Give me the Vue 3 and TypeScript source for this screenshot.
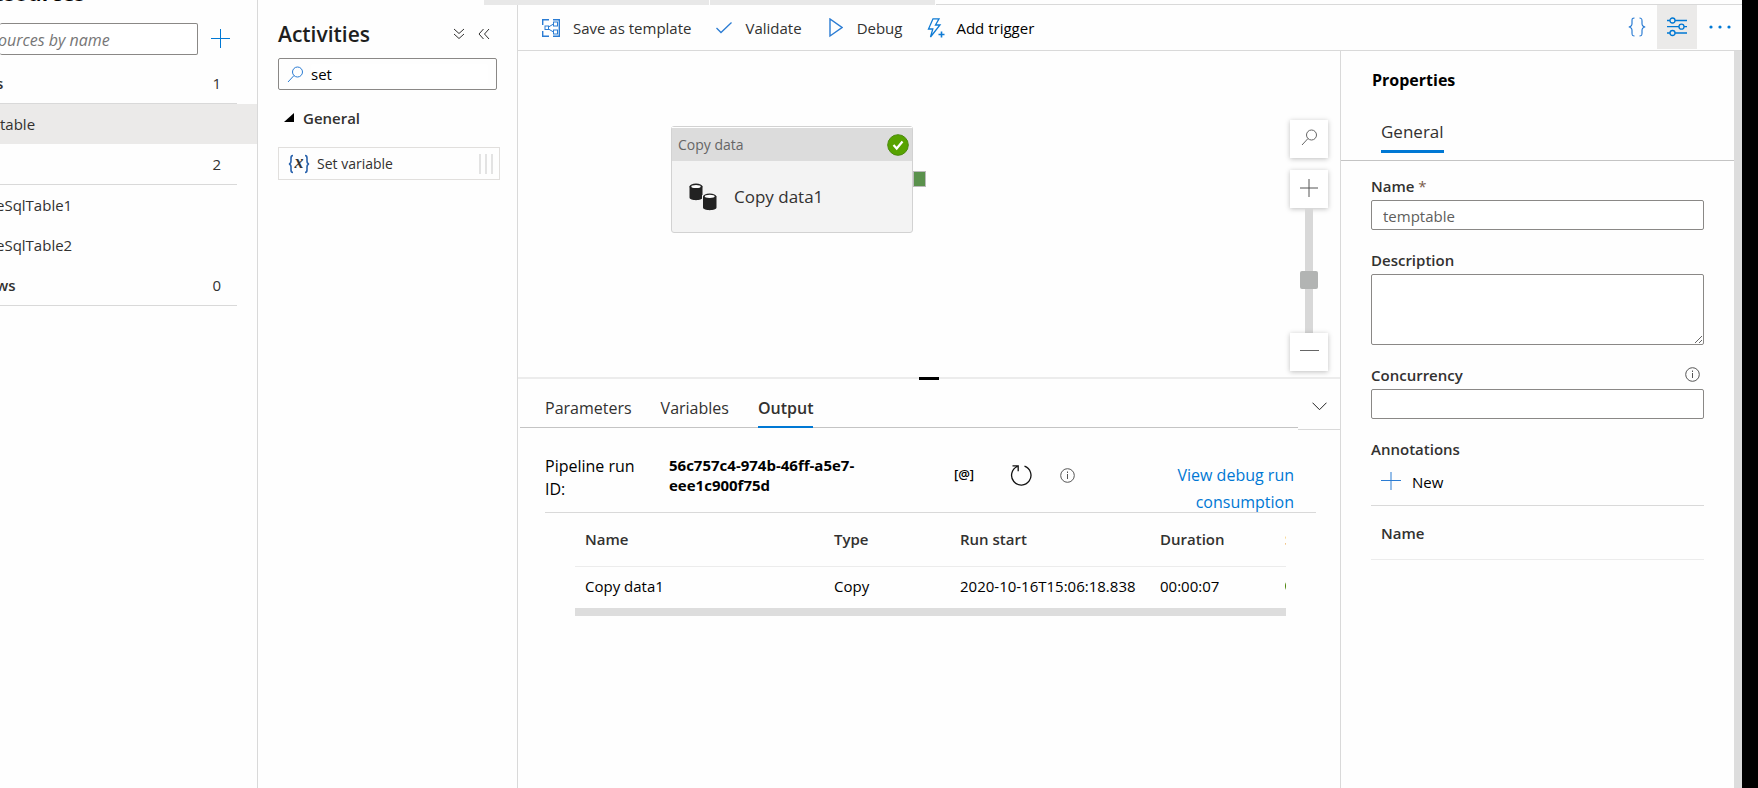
<script setup lang="ts">
import { ref } from 'vue'

interface ResourceRow {
  label: string
  kind: 'group' | 'item'
  count?: number
  selected?: boolean
}

interface ActivityRun {
  name: string
  type: string
  start: string
  duration: string
}

const resources: ResourceRow[] = [
  { label: 's', kind: 'group', count: 1 },
  { label: 'table', kind: 'item', selected: true },
  { label: '', kind: 'group', count: 2 },
  { label: 'eSqlTable1', kind: 'item' },
  { label: 'eSqlTable2', kind: 'item' },
  { label: 'ws', kind: 'group', count: 0 },
]

const runs: ActivityRun[] = [
  { name: 'Copy data1', type: 'Copy', start: '2020-10-16T15:06:18.838', duration: '00:00:07' },
]

const tabs = ['Parameters', 'Variables', 'Output']
const activeTab = ref('Output')
const resourceFilter = ref('')
const activityFilter = ref('set')
const zoomLevel = ref(41)
const pipelineName = ref('temptable')
const description = ref('')
const concurrency = ref('')
</script>

<template>
  <div class="app">
    <aside class="resources">
      <h2 class="resources-title">esources</h2>
      <div class="resources-search">
        <input v-model="resourceFilter" type="text" placeholder="ources by name" aria-label="Filter by name" />
        <button type="button" class="plain" aria-label="Add resource">
          <svg width="20" height="20" viewBox="0 0 20 20" fill="none" stroke="#0078d4"><path d="M10.5 0v19M1 9.5h19" /></svg>
        </button>
      </div>
      <ul class="resource-list">
        <li v-for="(row, i) in resources" :key="i" :class="[row.kind, { selected: row.selected }]">
          <span>{{ row.label }}</span>
          <span v-if="row.kind === 'group'" class="count">{{ row.count }}</span>
        </li>
      </ul>
    </aside>

    <div class="body">
      <div class="tab-strip">
        <div class="strip-tab"></div>
        <div class="strip-tab"></div>
        <div class="strip-rest"></div>
      </div>

      <div class="columns">
        <section class="activities">
          <header class="activities-head">
            <h2>Activities</h2>
            <button type="button" class="plain" aria-label="Expand all">
              <svg width="12" height="12" viewBox="0 0 12 12" fill="none" stroke="#323130"><path d="M1 1l5 4.500 5-4.500M1 6l5 4.500 5-4.500" /></svg>
            </button>
            <button type="button" class="plain" aria-label="Collapse panel">
              <svg width="12" height="12" viewBox="0 0 12 12" fill="none" stroke="#323130"><path d="M5.500 1L1 6l4.500 5M11 1L6.500 6l4.500 5" /></svg>
            </button>
          </header>
          <div class="activity-search">
            <svg width="17" height="17" viewBox="0 0 17 17" fill="none" stroke="#2b7cd3"><circle cx="10.500" cy="6" r="5" /><path d="M7 9.500L1 16" /></svg>
            <input v-model="activityFilter" type="text" aria-label="Search activities" />
          </div>
          <button type="button" class="plain group-toggle">
            <svg width="10" height="10" viewBox="0 0 10 10"><path d="M10 0v9H0z" fill="#000" /></svg>
            General
          </button>
          <div class="activity-item">
            <svg width="22" height="20" viewBox="0 0 22 20" fill="none">
              <path d="M5 1.500C3 1.500 3 2.500 3 4v3c0 2-.5 2.700-2 3 1.500.3 2 1 2 3v3c0 1.500 0 2.500 2 2.500M17 1.500c2 0 2 1 2 2.500v3c0 2 .5 2.700 2 3-1.500.3-2 1-2 3v3c0 1.500 0 2.500-2 2.500" stroke="#2a63ad" stroke-width="1.600" />
              <text x="11" y="14" text-anchor="middle" fill="#333" font-family="Liberation Serif, serif" font-size="18" font-style="italic" font-weight="700">x</text>
            </svg>
            <span>Set variable</span>
            <i class="grip"></i>
          </div>
        </section>

        <main class="workspace">
          <div class="toolbar">
            <button type="button" class="plain tool save">
              <svg width="18" height="18" viewBox="0 0 18 18" fill="none" stroke="#2b7cd3">
                <path d="M7 .7H.7V6M.7 12v5.300H7M11 17.300h6.300V7M17.300 7V.7H11" stroke-width="1.400" />
                <rect x="3" y="7" width="3.500" height="3.500" /><rect x="11.500" y="3" width="4" height="4" /><rect x="11.500" y="11" width="4" height="4" />
                <path d="M6.500 8l5-3M6.500 10l5 3" />
              </svg>
              Save as template
            </button>
            <button type="button" class="plain tool validate">
              <svg width="16" height="12" viewBox="0 0 16 12" fill="none" stroke="#2b7cd3" stroke-width="1.300"><path d="M.5 6L5 10.500 15.500.5" /></svg>
              Validate
            </button>
            <button type="button" class="plain tool debug">
              <svg width="14" height="20" viewBox="0 0 14 20" fill="none" stroke="#2b7cd3" stroke-width="1.400"><path d="M1 1v17L13 9.500z" /></svg>
              Debug
            </button>
            <button type="button" class="plain tool trigger">
              <svg width="18" height="20" viewBox="0 0 18 20" fill="none" stroke="#0f7bd4" stroke-width="1.300">
                <path d="M6 .8h6L8.500 7H13L3.500 19l2.300-8H1.500z" /><path d="M14.500 13.500v6M11.500 16.500h6" stroke-width="1.600" />
              </svg>
              Add trigger
            </button>
            <div class="spacer"></div>
            <button type="button" class="plain square" aria-label="Code">
              <svg width="18" height="20" viewBox="0 0 18 20" fill="none" stroke="#2b7cd3" stroke-width="1.200">
                <path d="M6.500 1C4 1 4 2 4 4v2.500C4 9 3 9.700.8 10 3 10.300 4 11 4 13.500V16c0 2 0 3 2.500 3M11.500 1C14 1 14 2 14 4v2.500c0 2.500 1 3.200 3.200 3.500-2.200.3-3.200 1-3.200 3.500V16c0 2 0 3-2.500 3" />
              </svg>
            </button>
            <button type="button" class="plain square on" aria-label="Properties">
              <svg width="20" height="20" viewBox="0 0 20 20" fill="none" stroke="#0078d4" stroke-width="1.300">
                <path d="M0 3.500h3M8 3.500h12M0 9.700h12M17 9.700h3M0 16h3M8 16h12" /><circle cx="5.500" cy="3.500" r="2.500" /><circle cx="14.500" cy="9.700" r="2.500" /><circle cx="5.500" cy="16" r="2.500" />
              </svg>
            </button>
            <button type="button" class="plain square dots" aria-label="More">
              <svg width="22" height="4" viewBox="0 0 22 4" fill="#0078d4"><circle cx="2" cy="2" r="1.600" /><circle cx="11" cy="2" r="1.600" /><circle cx="20" cy="2" r="1.600" /></svg>
            </button>
          </div>

          <div class="work-row">
            <div class="center">
              <div class="canvas">
                <div class="node">
                  <div class="node-head">
                    <span>Copy data</span>
                    <svg width="22" height="22" viewBox="0 0 22 22"><circle cx="11" cy="11" r="10.300" fill="#57a300" stroke="#4b8a0c" /><path d="M6.500 11l3.200 3.500L15.500 7.500" fill="none" stroke="#fff" stroke-width="2.200" /></svg>
                  </div>
                  <div class="node-body">
                    <svg width="28" height="28" viewBox="0 0 28 28" fill="#222">
                      <path d="M.5 3.500v11c0 3.500 13 3.500 13 0v-11z" /><ellipse cx="7" cy="3.500" rx="6.500" ry="3" /><ellipse cx="7" cy="3.500" rx="4.700" ry="1.500" fill="#fff" />
                      <path d="M13 12v12.500c0 4 15 4 15 0V12z" fill="#f3f3f3" />
                      <path d="M14 13.500v11c0 3.500 13.500 3.500 13.500 0v-11z" /><ellipse cx="20.700" cy="13.500" rx="6.700" ry="3" /><ellipse cx="20.700" cy="13.300" rx="5" ry="1.600" fill="#fff" />
                    </svg>
                    <span>Copy data1</span>
                  </div>
                  <i class="port"></i>
                </div>

                <div class="zoom">
                  <button type="button" class="plain zoom-btn search" aria-label="Search canvas">
                    <svg width="17" height="17" viewBox="0 0 17 17" fill="none" stroke="#666"><circle cx="10.500" cy="6" r="5" /><path d="M7 9.500L1 16" /></svg>
                  </button>
                  <button type="button" class="plain zoom-btn" aria-label="Zoom in">
                    <svg width="18" height="18" viewBox="0 0 18 18" stroke="#555"><path d="M9 0v18M0 9h18" /></svg>
                  </button>
                  <input v-model="zoomLevel" type="range" min="0" max="100" aria-label="Zoom" />
                  <button type="button" class="plain zoom-btn" aria-label="Zoom out">
                    <svg width="19" height="3" viewBox="0 0 19 3" stroke="#666"><path d="M0 1.500h19" /></svg>
                  </button>
                </div>
              </div>

              <div class="panel">
                <i class="handle"></i>
                <div class="panel-tabs">
                  <nav>
                    <button v-for="t in tabs" :key="t" type="button" class="plain tab" :class="{ active: t === activeTab }" @click="activeTab = t">{{ t }}</button>
                  </nav>
                  <button type="button" class="plain collapse" aria-label="Collapse">
                    <svg width="15" height="9" viewBox="0 0 15 9" fill="none" stroke="#222"><path d="M.5.7l7 7 7-7" /></svg>
                  </button>
                </div>

                <div class="run-info">
                  <span class="run-label">Pipeline run ID:</span>
                  <span class="run-id">56c757c4-974b-46ff-a5e7-eee1c900f75d</span>
                  <div class="run-icons">
                    <button type="button" class="plain at">[@]</button>
                    <button type="button" class="plain" aria-label="Refresh">
                      <svg width="22" height="22" viewBox="0 0 22 22" fill="none" stroke="#111" stroke-width="1.300"><path d="M14.500 2.200A9.700 9.700 0 1 1 7.300 2.500M2.500 1.800h5.700v5.500" /></svg>
                    </button>
                    <button type="button" class="plain" aria-label="Information">
                      <svg width="15" height="15" viewBox="0 0 15 15" fill="none" stroke="#555"><circle cx="7.500" cy="7.500" r="6.800" /><path d="M7.500 6v5M7.500 3.500v1.500" /></svg>
                    </button>
                  </div>
                  <a href="#">View debug run consumption</a>
                </div>

                <div class="runs">
                  <table>
                    <thead>
                      <tr><th class="c-name">Name</th><th class="c-type">Type</th><th class="c-start">Run start</th><th class="c-dur">Duration</th><th class="c-status">Status</th></tr>
                    </thead>
                    <tbody>
                      <tr v-for="r in runs" :key="r.name">
                        <td>{{ r.name }}</td><td>{{ r.type }}</td><td>{{ r.start }}</td><td>{{ r.duration }}</td>
                        <td><svg width="14" height="14" viewBox="0 0 14 14"><circle cx="7" cy="7" r="7" fill="#498205" /></svg></td>
                      </tr>
                    </tbody>
                  </table>
                  <div class="h-scroll"></div>
                </div>
              </div>
            </div>

            <section class="properties">
              <h3>Properties</h3>
              <div class="prop-tabs"><button type="button" class="plain">General</button></div>
              <form class="prop-form" @submit.prevent>
                <div class="field">
                  <label for="p-name">Name <span class="req">*</span></label>
                  <input id="p-name" v-model="pipelineName" type="text" />
                </div>
                <div class="field">
                  <label for="p-desc">Description</label>
                  <textarea id="p-desc" v-model="description"></textarea>
                </div>
                <div class="field">
                  <div class="label-row">
                    <label for="p-conc">Concurrency</label>
                    <svg width="15" height="15" viewBox="0 0 15 15" fill="none" stroke="#555"><circle cx="7.500" cy="7.500" r="6.800" /><path d="M7.500 6v5M7.500 3.500v1.500" /></svg>
                  </div>
                  <input id="p-conc" v-model="concurrency" type="text" />
                </div>
                <div class="annotations">
                  <span class="label">Annotations</span>
                  <button type="button" class="plain new">
                    <svg width="20" height="20" viewBox="0 0 20 20" fill="none" stroke="#2b7cd3"><path d="M10 0v18M0 8.500h20" /></svg>
                    New
                  </button>
                  <table><thead><tr><th>Name</th></tr></thead></table>
                </div>
              </form>
            </section>
            <div class="v-scroll"></div>
          </div>
        </main>
      </div>
    </div>
    <div class="edge"></div>
  </div>
</template>

<style>
body {
  background: #fefefe;
}
</style>

<style scoped>
.app {
  display: flex;
  min-height: 100vh;
  font-family: 'Segoe UI', 'Open Sans', 'Noto Sans', sans-serif;
  font-size: 15px;
  line-height: 20px;
  color: #323130;
  overflow: hidden;
}
.app *,
.app *::before {
  box-sizing: border-box;
}
h2,
h3,
ul {
  margin: 0;
  padding: 0;
}
svg {
  display: block;
  flex: none;
}
input,
textarea {
  font: inherit;
  color: inherit;
  border: 1px solid #8a8886;
  border-radius: 2px;
  background: #fff;
  outline: none;
}
.plain {
  font: inherit;
  color: inherit;
  padding: 0;
  border: 0;
  background: none;
}

/* Resource explorer, scrolled towards its right edge */
.resources {
  width: 258px;
  flex: none;
  border-right: 1px solid #d9d9d9;
  overflow: hidden;
}
.resources-title {
  margin: -20px 0 0 -8px;
  font-size: 21px;
  line-height: 26px;
  color: #000;
}
.resources-search {
  display: flex;
  align-items: center;
  gap: 12px;
  margin-top: 17px;
}
.resources-search input {
  width: 198px;
  height: 32px;
  border-left: 0;
  padding: 2px 0 0;
  font-size: 16px;
  text-indent: -2px;
}
.resources-search input::placeholder {
  color: #767676;
  font-style: italic;
}
.resource-list {
  list-style: none;
  margin-top: 8px;
}
.resource-list li {
  display: flex;
  align-items: center;
  justify-content: space-between;
  height: 40px;
  text-indent: -4px;
}
.resource-list .group {
  height: 41px;
  margin-right: 20px;
  padding-right: 16px;
  border-bottom: 1px solid #d9d9d9;
  font-weight: 600;
}
.resource-list .count {
  font-weight: 400;
  text-indent: 0;
}
.resource-list .selected {
  background: #ebeae9;
  text-indent: 0;
}

.body {
  flex: 1;
  min-width: 0;
  display: flex;
  flex-direction: column;
}
.tab-strip {
  display: flex;
  gap: 1px;
  height: 5px;
  padding-left: 226px;
}
.strip-tab {
  width: 225px;
  background: #e8e8e8;
}
.strip-rest {
  flex: 1;
  border-bottom: 1px solid #d9d9d9;
}
.columns {
  flex: 1;
  display: flex;
}

.activities {
  width: 260px;
  flex: none;
  padding: 13px 17px 0 20px;
  border-right: 1px solid #d9d9d9;
}
.activities-head {
  display: flex;
  align-items: center;
  gap: 13px;
  padding-right: 10px;
}
.activities-head h2 {
  flex: 1;
  font-size: 21px;
  line-height: 32px;
  font-weight: 600;
  color: #201f1e;
}
.activity-search {
  display: flex;
  align-items: center;
  gap: 7px;
  height: 32px;
  margin: 8px 3px 0 0;
  padding: 0 8px;
  border: 1px solid #8a8886;
  border-radius: 2px;
}
.activity-search input {
  flex: 1;
  min-width: 0;
  border: 0;
  padding: 0;
  color: #000;
}
.group-toggle {
  display: flex;
  align-items: center;
  gap: 9px;
  margin: 18px 0 0 6px;
  font-weight: 600;
}
.activity-item {
  display: flex;
  align-items: center;
  gap: 7px;
  height: 33px;
  margin-top: 19px;
  padding: 0 6px 0 9px;
  border: 1px solid #e1dfdd;
  font-size: 14px;
}
.activity-item span {
  flex: 1;
}
.grip {
  width: 14px;
  height: 20px;
  background: repeating-linear-gradient(90deg, #e3e3e3 0 2px, transparent 2px 6px);
}

.workspace {
  flex: 1;
  min-width: 0;
  display: flex;
  flex-direction: column;
}
.toolbar {
  display: flex;
  height: 46px;
  padding-left: 24px;
  border-bottom: 1px solid #d9d9d9;
}
.tool {
  display: flex;
  align-items: center;
  gap: 13px;
  margin-right: 25px;
}
.tool.debug {
  margin-left: 2px;
  gap: 14px;
}
.tool.trigger {
  gap: 11px;
  color: #000;
}
.spacer {
  flex: 1;
}
.square {
  display: flex;
  align-items: center;
  justify-content: center;
  width: 40px;
  height: 44px;
}
.square.on {
  background: #ebeae9;
}
.square.dots {
  width: 45px;
}

.work-row {
  flex: 1;
  display: flex;
}
.center {
  flex: 1;
  min-width: 0;
  display: flex;
  flex-direction: column;
}
.canvas {
  position: relative;
  height: 328px;
  border-bottom: 2px solid #ececec;
}
.node {
  position: absolute;
  left: 153px;
  top: 75px;
  width: 242px;
  border: 1px solid #d2d2d2;
  border-radius: 3px;
  background: #f3f3f3;
}
.node-head {
  display: flex;
  align-items: center;
  justify-content: space-between;
  height: 34px;
  padding: 1px 3px 0 6px;
  background: #dcdcdc;
  border-top: 1px solid #fff;
  font-size: 14px;
  color: #666;
}
.node-body {
  display: flex;
  align-items: center;
  gap: 17px;
  height: 71px;
  padding-left: 17px;
  font-size: 17px;
}
.port {
  position: absolute;
  left: 241px;
  top: 44px;
  width: 13px;
  height: 16px;
  border: 1px solid #bbb;
  background: #5a914c;
}
.zoom {
  position: absolute;
  right: 12px;
  top: 69px;
  display: flex;
  flex-direction: column;
  align-items: center;
}
.zoom-btn {
  display: flex;
  align-items: center;
  justify-content: center;
  width: 38px;
  height: 38px;
  padding-bottom: 3px;
  background: #fff;
  box-shadow: 0 1px 5px rgba(0, 0, 0, 0.25);
}
.zoom-btn.search {
  margin-bottom: 12px;
}
.zoom input {
  appearance: none;
  writing-mode: vertical-lr;
  direction: rtl;
  width: 18px;
  height: 125px;
  margin: 0;
  border: 0;
  border-radius: 0;
  background: linear-gradient(90deg, transparent 5px, #d8d8d8 5px 13px, transparent 13px);
}
.zoom input::-webkit-slider-thumb {
  appearance: none;
  width: 18px;
  height: 18px;
  border-radius: 2px;
  background: #b2b4b3;
}

.panel {
  position: relative;
}
.handle {
  position: absolute;
  top: -2px;
  left: 50%;
  width: 20px;
  height: 3px;
  margin-left: -10px;
  background: #000;
}
.panel-tabs {
  display: flex;
  padding-left: 2px;
}
.panel-tabs nav {
  flex: 1;
  display: flex;
  gap: 29px;
  height: 49px;
  padding-left: 25px;
  border-bottom: 1px solid #c4c4c4;
  font-size: 16px;
}
.tab {
  height: 49px;
  padding-top: 8px;
}
.tab.active {
  font-weight: 600;
  box-shadow: inset 0 -2px #0078d4;
}
.collapse {
  display: flex;
  align-items: center;
  justify-content: center;
  width: 42px;
  height: 51px;
  padding-top: 4px;
  border-bottom: 1px solid #d9d9d9;
}
.run-info {
  display: flex;
  margin: 0 24px 0 27px;
  height: 83px;
  padding: 25px 22px 0 0;
  border-bottom: 1px solid #d9d9d9;
  font-size: 16px;
  color: #000;
}
.run-label {
  width: 124px;
  padding-right: 24px;
  line-height: 23px;
}
.run-id {
  width: 200px;
  font-size: 15px;
  font-weight: 700;
}
.run-icons {
  display: flex;
  align-items: center;
  gap: 28px;
  height: 40px;
  margin-left: 83px;
}
.run-icons .at {
  width: 28px;
  margin-right: 2px;
  padding: 0 4px 2px 0;
  font-size: 13px;
  font-weight: 600;
}
.run-info a {
  width: 140px;
  margin-left: auto;
  padding-top: 7px;
  line-height: 27px;
  text-align: right;
  color: #0078d4;
  text-decoration: none;
}
.runs {
  margin: 0 54px 0 57px;
  overflow: hidden;
}
table {
  border-collapse: collapse;
  table-layout: fixed;
  text-align: left;
}
.runs table {
  width: 860px;
  color: #000;
}
.runs th,
.runs td {
  padding: 0 0 0 10px;
}
.runs th {
  height: 53px;
  border-bottom: 1px solid #ececec;
  font-weight: 600;
  color: #323130;
}
.runs td {
  height: 42px;
  padding-bottom: 2px;
}
.c-name {
  width: 249px;
}
.c-type {
  width: 126px;
}
.c-start {
  width: 200px;
}
.c-dur {
  width: 125px;
}
.h-scroll {
  height: 8px;
  background: #ddd;
}

.properties {
  width: 394px;
  flex: none;
  border-left: 1px solid #d9d9d9;
}
.properties h3 {
  padding: 19px 0 0 31px;
  font-size: 16px;
  font-weight: 700;
  color: #000;
}
.prop-tabs {
  height: 71px;
  padding: 30px 0 0 40px;
  border-bottom: 1px solid #c4c4c4;
}
.prop-tabs button {
  height: 33px;
  padding-bottom: 7px;
  border-bottom: 3px solid #0078d4;
  font-size: 17px;
}
.prop-form {
  padding: 15px 30px 0;
}
.field {
  margin-bottom: 20px;
}
label,
.label {
  display: block;
  height: 24px;
  line-height: 20px;
  font-weight: 600;
}
.label-row {
  display: flex;
  justify-content: space-between;
  padding-right: 4px;
}
.label-row svg {
  margin-top: 2px;
}
.req {
  font-weight: 400;
  color: #7a5c4a;
}
.field input,
.field textarea {
  display: block;
  width: 100%;
  height: 30px;
  padding: 2px 11px 0;
  color: #605e5c;
}
.field textarea {
  height: 71px;
}
.new {
  display: flex;
  align-items: center;
  gap: 11px;
  height: 20px;
  margin: 9px 0 0 10px;
  color: #000;
}
.annotations table {
  width: 100%;
  margin-top: 13px;
  border-top: 1px solid #d9d9d9;
}
.annotations th {
  height: 54px;
  padding: 0 10px;
  border-bottom: 1px solid #ececec;
  font-weight: 600;
}
.v-scroll {
  width: 8px;
  background: #ddd;
}
.edge {
  width: 16px;
  flex: none;
  background: #000;
}
</style>
